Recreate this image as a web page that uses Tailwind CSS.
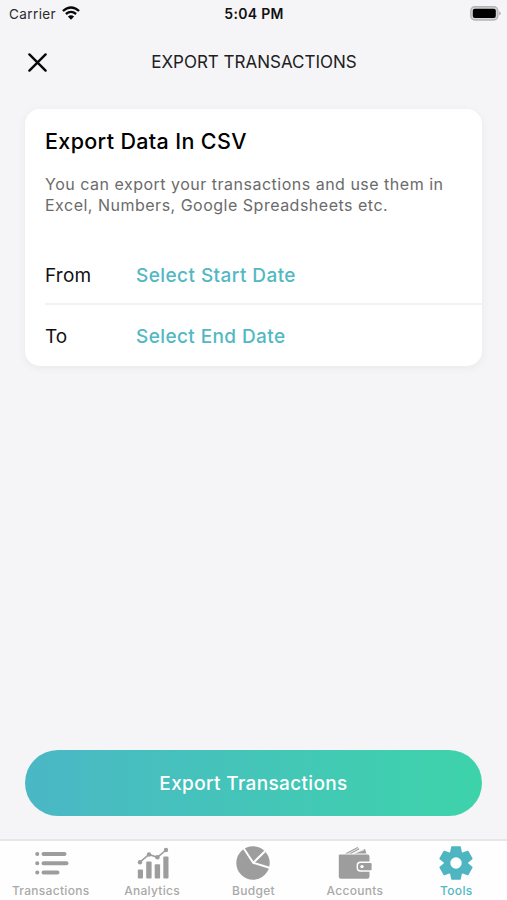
<!DOCTYPE html>
<html lang="en">
<head>
<meta charset="utf-8">
<title>Export Transactions</title>
<script src="https://cdn.jsdelivr.net/npm/@tailwindcss/browser@4"></script>
</head>
<body class="font-['Inter','Liberation_Sans',sans-serif]">
<div class="w-[507px] h-[900px] bg-[#f5f5f8] flex flex-col overflow-hidden text-[#111]">
  <div class="h-7 shrink-0 grid grid-cols-3 items-center pl-[9px] pr-[6px]">
    <div class="flex items-center gap-[6px] text-[13.5px] tracking-[0.4px] text-[#2b2b2d]"><span>Carrier</span>
      <svg width="18" height="14" viewBox="0 0 18 14" class="-mt-[2px]" fill="none" stroke="#080808" stroke-width="2.3"><path d="M.9 5Q9-2.1 17.1 5M3.9 8Q9 3.8 14.1 8"/><path d="M9 13.8 5.9 10.6Q9 8.1 12.1 10.6Z" fill="#080808" stroke="none"/></svg>
    </div>
    <div class="text-center text-[14px] font-semibold tracking-[0.3px] whitespace-nowrap -ml-[2px] -mt-[2px]">5:04 PM</div>
    <div class="flex justify-end">
      <svg width="31" height="15" viewBox="0 0 31 15" class="-mt-[2px]"><rect x=".8" y=".8" width="27" height="13.2" rx="4" fill="#d4d4d6" stroke="#b4b4b6" stroke-width="1.4"/><rect x="2.8" y="2.8" width="23" height="9.2" rx="2" fill="#000"/><path d="M29.2 5.2q3 2.2 0 4.4z" fill="#a9a9ab"/></svg>
    </div>
  </div>
  <div class="h-[68px] shrink-0 grid grid-cols-[75px_1fr_75px] items-center">
    <svg class="ml-[28px]" width="19" height="19" viewBox="0 0 19 19" fill="none" stroke="#080808" stroke-width="2.4" stroke-linecap="round"><path d="M1.4 1.4 17.6 17.6M17.6 1.4 1.4 17.6"/></svg>
    <h1 class="pt-[2px] pl-px text-center text-[17px] text-[#202022] whitespace-nowrap">EXPORT TRANSACTIONS</h1>
  </div>
  <section class="mt-[13px] mx-[25px] h-[257px] shrink-0 rounded-[15px] bg-white shadow-[0_2px_10px_rgba(0,0,0,0.05)] pl-5 flex flex-col">
    <h2 class="mt-[18px] h-7 leading-7 text-[21.5px] font-medium tracking-[0.35px] text-black whitespace-nowrap">Export Data In CSV</h2>
    <p class="mt-[19px] text-[16px] leading-[20.5px] tracking-[0.5px] text-[#6b6b6b] whitespace-nowrap">You can export your transactions and use them in<br>Excel, Numbers, Google Spreadsheets etc.</p>
    <div class="mt-auto h-[61px] pt-[5px] flex items-center border-b-2 border-[#f2f2f3] text-[19px]"><span class="w-[91px] tracking-[0.2px]">From</span><span class="font-medium tracking-[0.43px] text-[#52b8c3]">Select Start Date</span></div>
    <div class="h-[61px] pt-[3px] flex items-center text-[19px]"><span class="w-[91px]">To</span><span class="font-medium tracking-[0.4px] text-[#52b8c3]">Select End Date</span></div>
  </section>
  <button class="mt-auto mb-[23px] mx-[25px] h-[66px] pt-[2px] shrink-0 rounded-full bg-linear-to-r from-[#4ab7c5] to-[#3dd3aa] text-white text-[19px] font-medium tracking-[0.35px]">Export Transactions</button>
  <nav class="h-[61px] shrink-0 border-t-2 border-[#e6e6e8] bg-[#fefefe] grid grid-cols-5 text-[#a9a9a9] text-[12px] font-medium tracking-[0.3px]">
    <div class="flex flex-col items-center pt-[4px]">
      <svg width="36" height="36" viewBox="0 0 36 36" fill="none" stroke="#9d9d9d" stroke-width="4" stroke-linecap="round"><path d="M10.5 9H31.5M10.5 18.2H33.5M10.5 27.4H24.5M4.2 9h.1M4.2 18.2h.1M4.2 27.4h.1"/></svg><span class="mt-[2px] leading-4">Transactions</span>
    </div>
    <div class="flex flex-col items-center pt-[4px]">
      <svg width="36" height="36" viewBox="0 0 36 36" class="relative left-px" fill="#9d9d9d"><rect x="2.8" y="24.5" width="5.2" height="9" rx="1"/><rect x="11.2" y="16.5" width="5.4" height="17" rx="1"/><rect x="19.7" y="19.2" width="5.4" height="14.3" rx="1"/><rect x="28.3" y="11.5" width="5.2" height="22" rx="1"/><path d="m5 17.2 9-7.7 8.4 2.8L31 5" fill="none" stroke="#9d9d9d" stroke-width="1.6"/><circle cx="5" cy="17.2" r="2.2"/><circle cx="14" cy="9.5" r="2.2"/><circle cx="22.4" cy="12.3" r="2.2"/><circle cx="31" cy="5" r="2.2"/></svg><span class="mt-[2px] leading-4">Analytics</span>
    </div>
    <div class="flex flex-col items-center pt-[4px]">
      <svg width="36" height="36" viewBox="0 0 36 36"><circle cx="18" cy="18" r="16.7" fill="#9d9d9d"/><path d="M8.5 3 18.2 17.8 30 6.3M18.2 17.8 34.5 22.8" fill="none" stroke="#fefefe" stroke-width="2"/></svg><span class="mt-[2px] leading-4">Budget</span>
    </div>
    <div class="flex flex-col items-center pt-[4px]">
      <svg width="36" height="36" viewBox="0 0 36 36" fill="#9d9d9d"><path d="M8 8.4 20.5 2 22.6 4.2 14.5 8.4ZM16.5 8.4 28 4 29.4 8.4Z"/><path d="M11 8.6 21.5 3.2M16 8.8 27 4.8" stroke="#fefefe" stroke-width=".8"/><path d="M3.2 9.5H30.5Q32.5 9.5 32.5 11.5V31.5Q32.5 33.8 30.2 33.8H4Q1.8 33.8 1.8 31.5V10.5Q1.8 9.5 3.2 9.5Z"/><path d="M34.5 16.6H23.4Q19.6 16.6 19.6 20.3V23Q19.6 26.7 23.4 26.7H34.5Z" fill="#fefefe"/><path d="M33.7 18.1H23.8Q21 18.1 21 20.8V22.5Q21 25.2 23.8 25.2H33.7Q34.6 25.2 34.6 24.3V19Q34.6 18.1 33.7 18.1Z"/><circle cx="25" cy="21.6" r="1.7" fill="#fefefe"/></svg><span class="mt-[2px] leading-4">Accounts</span>
    </div>
    <div class="flex flex-col items-center pt-[4px] text-[#52b8c3]">
      <svg width="36" height="36" viewBox="-18 -18 36 36" fill="#4eb5c1" stroke="#4eb5c1" stroke-width="1.6" stroke-linejoin="round">
        <circle r="11.2"/>
        <path id="tooth" d="M-5.2-10-4.1-15.9H4.1L5.2-10V10L4.1 15.9H-4.1L-5.2 10Z"/>
        <use href="#tooth" transform="rotate(60)"/><use href="#tooth" transform="rotate(120)"/>
        <circle r="5.7" fill="#fefefe" stroke="none"/>
      </svg><span class="mt-[2px] leading-4">Tools</span>
    </div>
  </nav>
</div>
</body>
</html>
